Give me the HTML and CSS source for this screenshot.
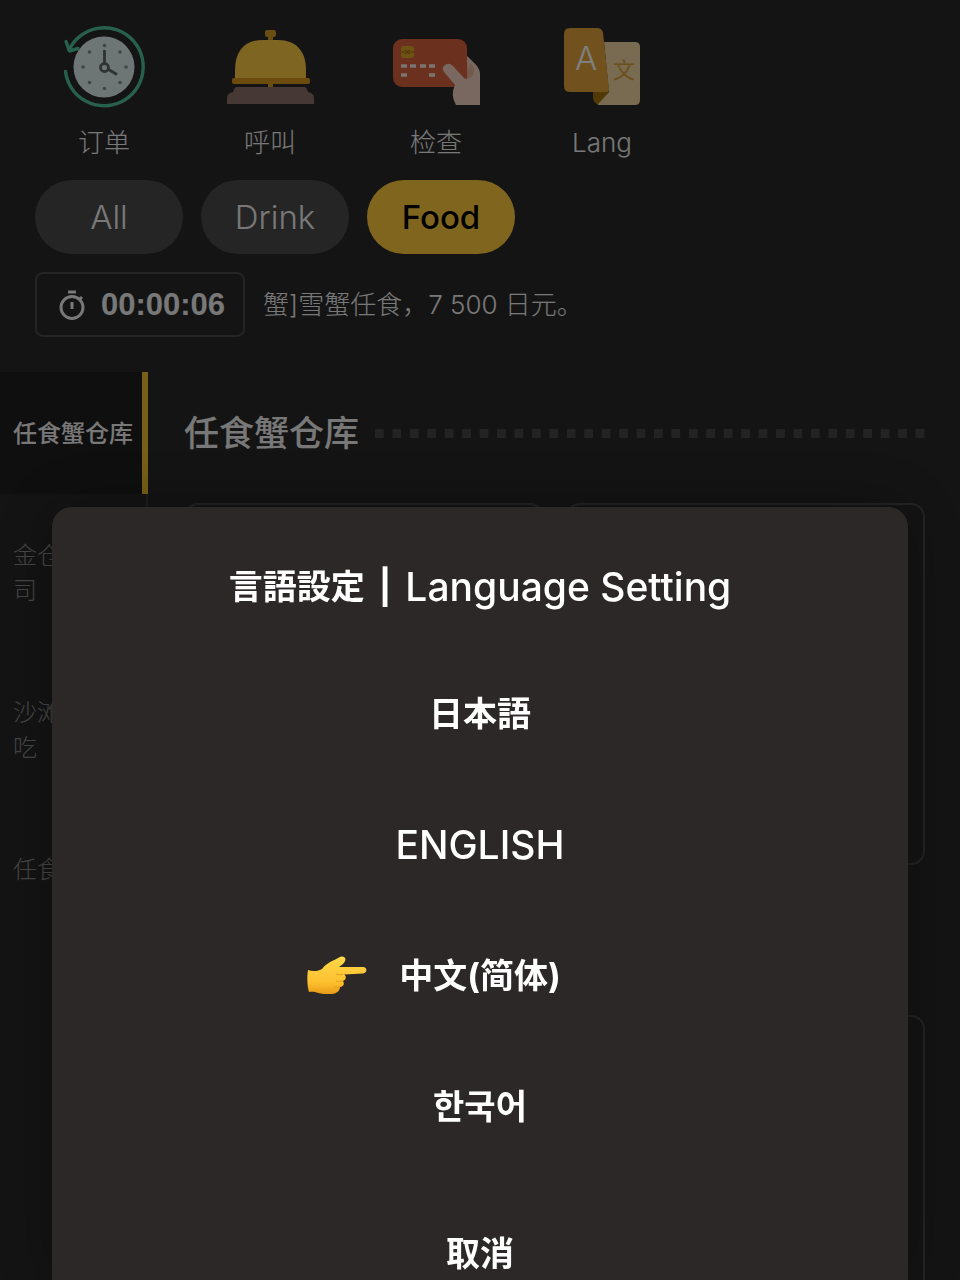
FILE: index.html
```html
<!DOCTYPE html>
<html lang="zh-CN">
<head>
    <meta charset="UTF-8">
    <meta name="viewport" content="width=device-width, initial-scale=1.0">
    <title>Menu</title>
    <link rel="stylesheet" href="styles.css">
</head>
<body>
    <div class="page">
        <!-- Top actions -->
        <nav class="actions">
            <button class="action">
                <svg viewBox="0 0 88 88" aria-hidden="true">
                    <circle cx="44" cy="44" r="30.5" fill="#dbebeb"/>
                    <path d="M5.5 48.5A39 39 0 1 0 9 27" fill="none" stroke="#4fc09a" stroke-width="3.4" stroke-linecap="round"/>
                    <path d="M6 18.500L9.500 28L18 25.500" fill="none" stroke="#4fc09a" stroke-width="3.4" stroke-linecap="round" stroke-linejoin="round"/>
                    <g fill="#7f8c8d">
                        <circle cx="44.500" cy="22.500" r="1.800"/>
                        <circle cx="60" cy="29" r="1.800"/>
                        <circle cx="66" cy="44" r="1.800"/>
                        <circle cx="60" cy="59.500" r="1.800"/>
                        <circle cx="44.500" cy="65.500" r="1.800"/>
                        <circle cx="29.500" cy="59.500" r="1.800"/>
                        <circle cx="23" cy="44" r="1.800"/>
                        <circle cx="29.500" cy="29" r="1.800"/>
                    </g>
                    <g fill="none" stroke="#5f6565" stroke-width="2.8">
                        <path d="M44.500 27V40M48.500 46.500L57 51.500"/>
                        <circle cx="44.500" cy="44.500" r="4"/>
                    </g>
                </svg>
                订单
            </button>
            <button class="action">
                <svg viewBox="0 0 88 88" aria-hidden="true">
                    <path d="M42 12h5v8h-5zM42 60h5v5h-5z" fill="#d49a22"/>
                    <rect x="39" y="7" width="11" height="7" rx="2" fill="#d49a22"/>
                    <path d="M9 56V47C9 28 19 17 37 17H52C70 17 80 28 80 47V56Z" fill="#fdcd45"/>
                    <rect x="6" y="55" width="78" height="6" rx="2" fill="#d9981c"/>
                    <path d="M10 64H79Q81 65 82 69Q88 70 88 75V81H1V75Q1 70 7 69Q8 65 10 64Z" fill="#8c7169"/>
                </svg>
                呼叫
            </button>
            <button class="action">
                <svg viewBox="0 0 88 88" aria-hidden="true">
                    <path d="M72 30L83 41Q88 46 88 54V66H70Z" fill="#d8a588"/>
                    <rect x="1" y="16" width="74" height="48" rx="9" fill="#d9603c"/>
                    <rect x="9" y="23" width="13" height="12" rx="3" fill="#dca726"/>
                    <path d="M9 29H13M18 29H22M13 27L15.500 29L13 31M18 27L15.500 29L18 31" fill="none" stroke="#a36d1c" stroke-width="1.200"/>
                    <path d="M9 43h6M18 43h6M28 43h6M37 43h6M9 52h6M37 52h6" stroke="#f4e8e4" stroke-width="3.600"/>
                    <path d="M75 33L84 42Q88 46 88 52V82H64Q58 72 63 62L52 49Q49 45 53 42Q57 39 61 43L72 55Q76 58 76 52Z" fill="#f3d0c0"/>
                    <path d="M78 40Q83 43 82 50Q81 54 76 55V48Z" fill="#e2b497"/>
                </svg>
                检查
            </button>
            <button class="action">
                <svg viewBox="0 0 88 88" aria-hidden="true">
                    <path d="M35 66H53L41 82Q35 80 35 74Z" fill="#a5740f"/>
                    <path d="M46 19H77Q82 19 82 24V77Q82 82 77 82H41Q39 82 41 80L51 69Z" fill="#f2d6a2"/>
                    <path d="M12 5H39Q44 5 45 10L51 66Q51 69 48 69H12Q6 69 6 63V11Q6 5 12 5Z" fill="#e2a53c"/>
                    <text class="glyph-a" x="28" y="47">A</text>
                    <text class="glyph-wen" x="66" y="55">文</text>
                </svg>
                Lang
            </button>
        </nav>

        <!-- Category filter -->
        <div class="filters">
            <button class="pill">All</button>
            <button class="pill">Drink</button>
            <button class="pill selected">Food</button>
        </div>

        <!-- Course timer -->
        <div class="course">
            <div class="timer">
                <svg viewBox="0 0 30 30" fill="none" stroke="currentColor" stroke-width="3" aria-hidden="true">
                    <circle cx="15" cy="17.500" r="11"/>
                    <path d="M11 2H19M15 12V19M22.500 9.500L25 7"/>
                </svg>
                <span>00:00:06</span>
            </div>
            <p class="course-name">蟹]雪蟹任食，7 500 日元。</p>
        </div>

        <div class="menu">
            <aside class="sidebar">
                <a class="tab active" href="#crab">任食蟹仓库</a>
                <a class="tab" href="#sushi">金仓库的寿司</a>
                <a class="tab" href="#snack">沙滩上的小吃</a>
                <a class="tab" href="#all">任食</a>
            </aside>
            <main class="content">
                <div class="section-head">
                    <h2>任食蟹仓库</h2>
                    <div class="dots"></div>
                </div>
                <div class="cards">
                    <div class="card"></div>
                    <div class="card"></div>
                    <div class="card"></div>
                    <div class="card"></div>
                </div>
            </main>
        </div>
    </div>

    <!-- Language dialog -->
    <div class="overlay">
        <div class="dialog" role="dialog" aria-labelledby="dialog-title">
            <h1 id="dialog-title">
                <span lang="ja">言語設定</span>
                <span>|</span>
                <span class="latin">Language Setting</span>
            </h1>
            <button class="option" lang="ja"><span class="label">日本語</span></button>
            <button class="option"><span class="label latin">ENGLISH</span></button>
            <button class="option">
                <svg class="hand" viewBox="0 0 60 40" aria-hidden="true">
                    <defs>
                        <linearGradient id="skin" x1="0" y1="0" x2="0" y2="1">
                            <stop offset="0" stop-color="#ffd84a"/>
                            <stop offset="0.700" stop-color="#fdc02f"/>
                            <stop offset="1" stop-color="#e79a17"/>
                        </linearGradient>
                    </defs>
                    <path d="M1 14C6 16 12 15 15 13C19 7 26 5 32 1.500C35 -1 40 1 38 5C37 8 34 9 32 11L56 11C60.500 11 60.500 17 56 17.500L37 18.500C40 20 39 24 36 25C38 28 36 31 33 31C33 35 29 38 25 38L17 38C11 38 9 35 2 36C0 30 0 20 1 14Z" fill="url(#skin)"/>
                    <path d="M36 18.500Q32 19 29 18M36 25Q32 26 29 25M33 31Q30 32 27 31" fill="none" stroke="#e5a01c" stroke-width="1"/>
                </svg>
                <span class="label">中文(简体)</span>
            </button>
            <button class="option" lang="ko"><span class="label">한국어</span></button>
            <button class="cancel">取消</button>
        </div>
    </div>
</body>
</html>
```

FILE: styles.css
```css
* {
    box-sizing: border-box;
}

body {
    margin: 0;
    height: 100vh;
    overflow: hidden; /* no scrolling behind the dialog */
    background-color: #282828;
    color: #f0f0f0;
    font-family: Inter, "Noto Sans CJK SC", sans-serif;
}

button {
    border: none;
    padding: 0;
    background: none;
    color: inherit;
    font-family: inherit;
    cursor: pointer;
}

h1, h2, p {
    margin: 0;
}

/* Top actions */
.actions {
    display: grid;
    grid-template-columns: repeat(4, 148px);
    gap: 18px;
    padding: 23px 30px 0;
}

.action {
    display: flex;
    flex-direction: column;
    align-items: center;
    gap: 14px;
    font-size: 26px;
    font-weight: 300;
    line-height: 36px;
}

.action svg {
    width: 88px;
    height: 88px;
}

.glyph-a {
    fill: #fff;
    font-size: 33px;
    text-anchor: middle;
}

.glyph-wen {
    fill: #d69d36;
    font-size: 22px;
    font-weight: 400;
    text-anchor: middle;
}

/* Category filter */
.filters {
    display: flex;
    gap: 18px;
    padding: 19px 35px 0;
}

.pill {
    width: 148px;
    height: 74px;
    border-radius: 37px;
    background-color: #4a4a4a;
    font-size: 33px;
    font-weight: 300;
}

.pill.selected {
    background-color: #fecb3c;
    color: #000;
    font-weight: 500;
}

/* Course timer */
.course {
    display: flex;
    align-items: center;
    gap: 18px;
    padding: 18px 35px 35px;
}

.timer {
    display: flex;
    align-items: center;
    gap: 14px;
    height: 65px;
    padding: 0 18px 0 20px;
    border: 2px solid #4a4a4a;
    border-radius: 8px;
    font-family: "Liberation Sans", Arial, sans-serif;
    font-size: 31px;
    font-weight: bold;
    line-height: 36px;
}

.timer svg {
    width: 30px;
    height: 30px;
}

.course-name {
    font-size: 26px;
    font-weight: 300;
    line-height: 36px;
}

/* Menu */
.menu {
    display: flex;
}

.sidebar {
    width: 148px;
    flex: none;
    border-right: 2px solid #3c3c3c;
}

.tab {
    display: block;
    padding: 44px 0 43px 13px;
    color: #8c8c8c;
    font-size: 24px;
    font-weight: 300;
    line-height: 35px;
    text-decoration: none;
}

.tab.active {
    margin-right: -2px;
    border-right: 6px solid #f0c030;
    background-color: #1f1e1e;
    color: #f0f0f0;
    font-weight: 500;
}

.content {
    flex: 1;
    padding: 0 35px 0 36px;
}

.section-head {
    display: flex;
    align-items: center;
    gap: 16px;
    height: 122px;
    margin-bottom: 9px;
}

.section-head h2 {
    font-size: 35px;
    font-weight: 500;
    line-height: 44px;
}

.dots {
    flex: 1;
    height: 9px;
    margin-right: -8px;
    background: linear-gradient(to right, #464646 9px, transparent 9px) 0 0 / calc(100% / 32) 9px;
}

.cards {
    display: grid;
    grid-template-columns: 1fr 1fr;
    gap: 150px 22px;
}

.card {
    height: 362px;
    border: 2px solid #484848;
    border-radius: 14px;
}

/* Language dialog */
.overlay {
    position: fixed;
    inset: 0;
    display: flex;
    align-items: flex-end;
    padding: 0 52px;
    background-color: rgba(0, 0, 0, 0.5);
}

.dialog {
    flex: 1;
    display: flex;
    flex-direction: column;
    border-radius: 20px 20px 0 0;
    background-color: #2c2827;
    box-shadow: 0 0 60px rgba(0, 0, 0, 0.3);
    color: #fff;
    text-align: center;
}

.dialog h1 {
    display: flex;
    justify-content: center;
    align-items: center;
    gap: 14px;
    height: 141px;
    padding-top: 18px;
}

.dialog h1,
.option,
.cancel {
    font-size: 34px;
    font-weight: bold;
    line-height: 44px;
}

.dialog .latin {
    font-size: 39px;
    font-weight: 500;
}

.option {
    display: grid;
    grid-template-columns: 1fr auto 1fr;
    align-items: center;
    height: 131px;
}

.option .label {
    grid-column: 2;
}

.dialog :lang(ja) {
    font-family: Inter, "Noto Sans CJK JP", sans-serif;
}

.dialog :lang(ko) {
    font-family: Inter, "Noto Sans CJK KR", sans-serif;
}

.hand {
    width: 60px;
    height: 40px;
    margin-right: 32px;
    justify-self: end;
}

.cancel {
    padding: 60px 0 4px;
}
```
